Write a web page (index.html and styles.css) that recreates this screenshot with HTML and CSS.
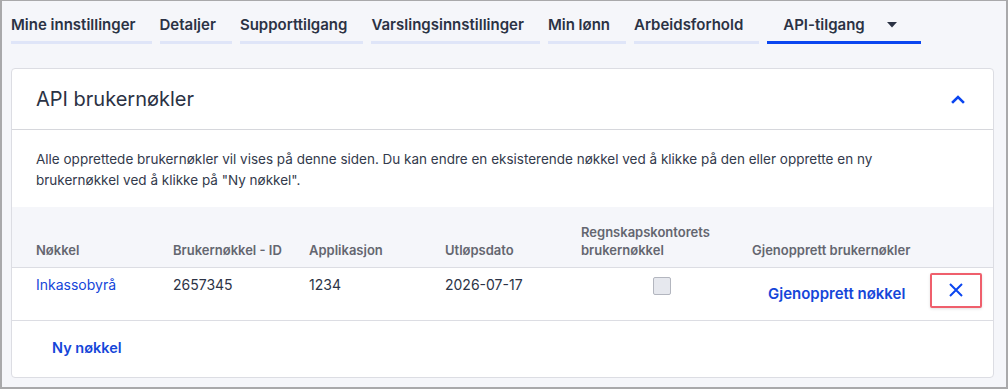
FILE: index.html
```html
<!DOCTYPE html>
<html lang="no">
<head>
    <meta charset="UTF-8">
    <meta name="viewport" content="width=device-width, initial-scale=1.0">
    <title>API-tilgang</title>
    <link rel="stylesheet" href="styles.css">
</head>
<body>
    <div class="frame">
        <nav class="tabs">
            <a class="tab">Mine innstillinger</a>
            <a class="tab">Detaljer</a>
            <a class="tab">Supporttilgang</a>
            <a class="tab">Varslingsinnstillinger</a>
            <a class="tab">Min lønn</a>
            <a class="tab">Arbeidsforhold</a>
            <a class="tab active">API-tilgang
                <svg class="caret" width="10" height="6" viewBox="0 0 10 6"><path d="M0 0h10L5 5.5z" fill="#2b3244"/></svg>
            </a>
        </nav>

        <section class="card">
            <header class="card-header">
                <h2>API brukernøkler</h2>
                <svg class="chevron" width="14" height="9" viewBox="0 0 14 9"><path d="M2 7l5-5 5 5" fill="none" stroke="#0b46f0" stroke-width="2.6" stroke-linecap="square"/></svg>
            </header>
            <div class="card-body">
                <p class="intro">Alle opprettede brukernøkler vil vises på denne siden. Du kan endre en eksisterende nøkkel ved å klikke på den eller opprette en ny brukernøkkel ved å klikke på "Ny nøkkel".</p>
            </div>
            <table class="keys">
                <thead>
                    <tr>
                        <th class="c1">Nøkkel</th>
                        <th class="c2">Brukernøkkel - ID</th>
                        <th class="c3">Applikasjon</th>
                        <th class="c4">Utløpsdato</th>
                        <th class="c5">Regnskapskontorets<br>brukernøkkel</th>
                        <th class="c6">Gjenopprett brukernøkler</th>
                        <th class="c7"></th>
                    </tr>
                </thead>
                <tbody>
                    <tr>
                        <td><a class="link">Inkassobyrå</a></td>
                        <td>2657345</td>
                        <td>1234</td>
                        <td>2026-07-17</td>
                        <td class="check-cell"><span class="checkbox"></span></td>
                        <td><button class="text-btn">Gjenopprett nøkkel</button></td>
                        <td class="close-cell">
                            <button class="close-btn">
                                <svg width="14" height="14" viewBox="0 0 14 14"><path d="M1 1l12 12M13 1L1 13" stroke="#0b46f0" stroke-width="2"/></svg>
                            </button>
                        </td>
                    </tr>
                </tbody>
            </table>
            <div class="card-footer">
                <button class="text-btn">Ny nøkkel</button>
            </div>
        </section>
    </div>
</body>
</html>
```

FILE: styles.css
```css
* {
    box-sizing: border-box;
}
body {
    margin: 0;
    font-family: Inter, "Noto Sans", sans-serif;
    color: #2c3346;
}
.frame {
    height: 389px;
    border: 2px solid #a9a9ab;
    border-top-width: 1px;
    background-color: #f5f6fa;
    padding: 0 12px 0 9px;
}
.tabs {
    display: flex;
    gap: 8px;
    padding-top: 14px;
}
.tab {
    font-size: 15px;
    font-weight: 600;
    line-height: 20px;
    color: #2b3244;
    padding: 0 16px 6px 0;
    border-bottom: 3px solid #dfe5f8;
}
.tab.active {
    padding-left: 16px;
    padding-right: 24px;
    border-bottom-color: #0b46f0;
    display: flex;
    align-items: center;
}
.caret {
    margin-left: 22px;
}
.card {
    margin-top: 24px;
    background: white;
    border: 1px solid #dcdde3;
    border-radius: 4px;
    overflow: hidden;
}
.card-header {
    height: 61px;
    display: flex;
    align-items: center;
    justify-content: space-between;
    padding: 0 28px 0 24px;
    border-bottom: 1px solid #d6d7dc;
}
.card-header h2 {
    margin: 0;
    font-size: 20px;
    font-weight: 400;
    color: #2b3244;
}
.card-body {
    padding: 19px 24px 16px;
}
.intro {
    margin: 0;
    max-width: 860px;
    font-size: 13.5px;
    line-height: 21px;
    color: #333a4c;
}
.keys {
    width: 100%;
    border-collapse: collapse;
    table-layout: fixed;
}
.keys th {
    background: #f5f6fa;
    height: 60px;
    vertical-align: bottom;
    text-align: left;
    font-size: 13px;
    font-weight: 600;
    line-height: 18px;
    color: #646670;
    padding: 0 0 8px 24px;
    border-bottom: 1px solid #dcdde3;
}
.c1 { width: 137px; }
.c2 { width: 136px; }
.c3 { width: 136px; }
.c4 { width: 136px; }
.c5 { width: 171px; }
.c6 { width: 200px; }
.keys td {
    vertical-align: top;
    height: 53px;
    padding: 7px 0 0 24px;
    font-size: 14px;
    line-height: 20px;
    border-bottom: 1px solid #dcdde3;
}
.link {
    color: #1546d9;
}
.check-cell {
    padding-top: 9px !important;
}
.checkbox {
    display: block;
    width: 18px;
    height: 18px;
    margin-left: 72px;
    background: #e6e8ee;
    border: 1px solid #b3b6bf;
    border-radius: 2px;
}
.text-btn {
    border: none;
    background: none;
    font-family: inherit;
    font-size: 14.5px;
    font-weight: 600;
    color: #1546d9;
    padding: 10px 16px;
    cursor: pointer;
}
.keys td .text-btn {
    font-size: 15px;
    margin-top: 9px;
    padding: 0 16px;
}
.close-cell {
    padding: 5px 0 0 2px !important;
}
.close-btn {
    width: 52px;
    height: 35px;
    display: flex;
    align-items: center;
    justify-content: center;
    background: white;
    border: 2px solid #ef5f6c;
    border-radius: 2px;
    box-shadow: 0 1px 3px rgba(0, 0, 0, 0.12);
    cursor: pointer;
}
.card-footer {
    height: 56px;
    padding: 8px 0 0 24px;
}
```
